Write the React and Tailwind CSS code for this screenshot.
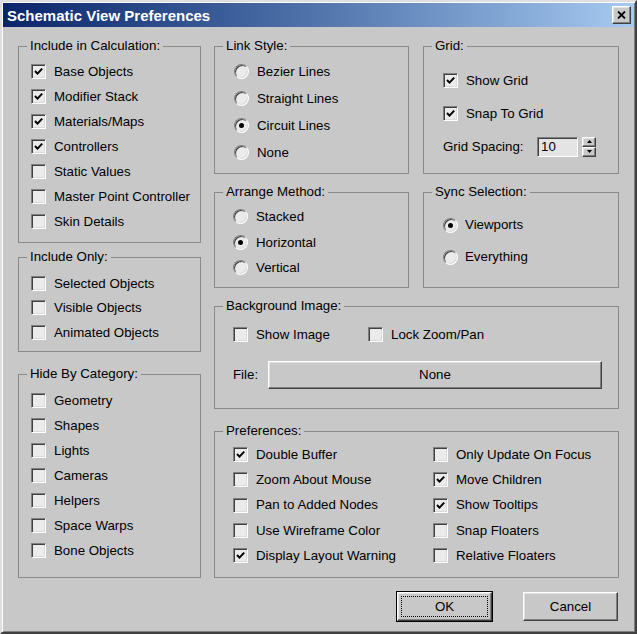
import React from 'react';

const font = "font-['Liberation_Sans',Arial,sans-serif]";

function CheckBox({ checked }) {
  return (
    <span className="flex h-[15px] w-[15px] shrink-0 items-center justify-center border border-t-[#808080] border-l-[#808080] border-b-white border-r-white bg-[#ebebeb] shadow-[inset_1px_1px_0_#404040,inset_-1px_-1px_0_#dadada]">
      {checked && (
        <svg width="11" height="11" viewBox="0 0 11 11">
          <polyline points="2,5 4.5,7.6 9.2,2.6" fill="none" stroke="#000" strokeWidth="2" />
        </svg>
      )}
    </span>
  );
}

function Radio({ checked }) {
  return (
    <span className="flex h-[15px] w-[15px] shrink-0 items-center justify-center rounded-full border border-t-[#808080] border-l-[#808080] border-b-white border-r-white bg-[#ebebeb] shadow-[inset_1px_1px_0_#404040,inset_-1px_-1px_0_#dadada]">
      {checked && <span className="h-[5px] w-[5px] rounded-full bg-black" />}
    </span>
  );
}

function Row({ kind = 'check', checked, label, h, gap = 'gap-[8px]', className = '' }) {
  return (
    <div className={`flex items-center ${gap} ${h} ${className}`}>
      {kind === 'check' ? <CheckBox checked={checked} /> : <Radio checked={checked} />}
      <span className="leading-none">{label}</span>
    </div>
  );
}

// group box: the padding goes on the inner div so the legend keeps its own offset
function Group({ label, className = '', inner = '', children }) {
  return (
    <fieldset className={`border border-[#8a8a8a] ${className}`}>
      <legend className="ml-[8px] px-[3px] leading-[16px]">{label}</legend>
      <div className={inner}>{children}</div>
    </fieldset>
  );
}

function RaisedBox({ className = '', children }) {
  return (
    <div
      className={`border border-t-white border-l-white border-b-[#404040] border-r-[#404040] bg-[#c8c8c8] shadow-[inset_-1px_-1px_0_#808080,inset_1px_1px_0_#e2e2e2] ${className}`}
    >
      {children}
    </div>
  );
}

const includeCalc = [
  ['Base Objects', true],
  ['Modifier Stack', true],
  ['Materials/Maps', true],
  ['Controllers', true],
  ['Static Values', false],
  ['Master Point Controller', false],
  ['Skin Details', false],
];

const includeOnly = ['Selected Objects', 'Visible Objects', 'Animated Objects'];

const hideBy = ['Geometry', 'Shapes', 'Lights', 'Cameras', 'Helpers', 'Space Warps', 'Bone Objects'];

const prefLeft = [
  ['Double Buffer', true],
  ['Zoom About Mouse', false],
  ['Pan to Added Nodes', false],
  ['Use Wireframe Color', false],
  ['Display Layout Warning', true],
];

const prefRight = [
  ['Only Update On Focus', false],
  ['Move Children', true],
  ['Show Tooltips', true],
  ['Snap Floaters', false],
  ['Relative Floaters', false],
];

export default function App() {
  return (
    <div
      className={`${font} flex h-[634px] w-[637px] flex-col border-2 border-t-[#dfdfdf] border-l-[#dfdfdf] border-r-[#404040] border-b-[#404040] bg-[#c8c8c8] p-px text-[13.3px] text-black shadow-[inset_1px_1px_0_#fff,inset_-1px_-1px_0_#808080]`}
    >
      {/* title bar */}
      <div className="flex h-[24px] shrink-0 items-center justify-between bg-linear-to-r from-[#0a246a] to-[#a6caf0] pl-[4px] pr-[3px]">
        <span className="text-[15px] font-bold leading-none text-white">Schematic View Preferences</span>
        <RaisedBox className="flex h-[18px] w-[19px] items-center justify-center">
          <svg width="9" height="8" viewBox="0 0 9 8">
            <path d="M1 0.5 L8 7.5 M8 0.5 L1 7.5" stroke="#000" strokeWidth="1.8" />
          </svg>
        </RaisedBox>
      </div>

      <div className="flex gap-[13px] px-[15px] pt-[11px]">
        {/* left column */}
        <div className="flex w-[183px] flex-col">
          <Group label="Include in Calculation:" className="h-[205px]" inner="pl-[12px] pt-[5px]">
            {includeCalc.map(([l, c]) => (
              <Row key={l} label={l} checked={c} h="h-[25px]" />
            ))}
          </Group>
          <Group label="Include Only:" className="mt-[6px] h-[103px]" inner="pl-[12px] pt-[6px]">
            {includeOnly.map((l) => (
              <Row key={l} label={l} h="h-[24.5px]" />
            ))}
          </Group>
          <Group label="Hide By Category:" className="mt-[14px] h-[212px]" inner="pl-[12px] pt-[6px]">
            {hideBy.map((l) => (
              <Row key={l} label={l} h="h-[25px]" />
            ))}
          </Group>
        </div>

        {/* right area */}
        <div className="flex w-[405px] flex-col">
          <div className="grid grid-cols-[195px_196px] gap-x-[14px] gap-y-[10px]">
            <Group label="Link Style:" className="h-[136px]" inner="pl-[19px] pt-[4px]">
              <Row kind="radio" label="Bezier Lines" h="h-[27px]" />
              <Row kind="radio" label="Straight Lines" h="h-[27px]" />
              <Row kind="radio" label="Circuit Lines" checked h="h-[27px]" />
              <Row kind="radio" label="None" h="h-[27px]" />
            </Group>
            <Group label="Grid:" className="h-[136px]" inner="pl-[19px] pt-[10px]">
              <Row label="Show Grid" checked h="h-[33px]" />
              <Row label="Snap To Grid" checked h="h-[33px]" />
              <div className="flex h-[33px] items-center">
                <span className="w-[94px]">Grid Spacing:</span>
                <div className="flex h-[20px] w-[41px] items-center border border-t-[#808080] border-l-[#808080] border-b-white border-r-white bg-[#e4e4e4] pl-[3px] shadow-[inset_1px_1px_0_#404040]">
                  10
                </div>
                <div className="ml-[4px] flex h-[20px] w-[14px] flex-col">
                  <RaisedBox className="flex flex-1 items-center justify-center">
                    <svg width="5" height="3" viewBox="0 0 5 3">
                      <path d="M2.5 0 L5 3 L0 3 Z" fill="#000" />
                    </svg>
                  </RaisedBox>
                  <RaisedBox className="flex flex-1 items-center justify-center">
                    <svg width="5" height="3" viewBox="0 0 5 3">
                      <path d="M0 0 L5 0 L2.5 3 Z" fill="#000" />
                    </svg>
                  </RaisedBox>
                </div>
              </div>
            </Group>
            <Group label="Arrange Method:" className="h-[104px]" inner="pl-[18px] pt-[4px]">
              <Row kind="radio" label="Stacked" h="h-[25.5px]" />
              <Row kind="radio" label="Horizontal" checked h="h-[25.5px]" />
              <Row kind="radio" label="Vertical" h="h-[25.5px]" />
            </Group>
            <Group label="Sync Selection:" className="h-[104px]" inner="pl-[19px] pt-[9px]">
              <Row kind="radio" label="Viewports" checked h="h-[32px]" gap="gap-[7px]" />
              <Row kind="radio" label="Everything" h="h-[32px]" gap="gap-[7px]" />
            </Group>
          </div>

          <Group label="Background Image:" className="mt-[10px] h-[111px]" inner="pl-[18px] pr-[16px] pt-[8px]">
            <div className="flex h-[25px] items-center">
              <Row label="Show Image" h="h-[25px]" className="w-[135px]" />
              <Row label="Lock Zoom/Pan" h="h-[25px]" />
            </div>
            <div className="mt-[14px] flex items-center">
              <span className="w-[35px]">File:</span>
              <RaisedBox className="flex h-[28px] flex-1 items-center justify-center">None</RaisedBox>
            </div>
          </Group>

          <Group label="Preferences:" className="mt-[14px] h-[155px]" inner="pl-[18px] pt-[3px]">
            <div className="grid grid-cols-[200px_1fr]">
              <div className="flex flex-col">
                {prefLeft.map(([l, c]) => (
                  <Row key={l} label={l} checked={c} h="h-[25.25px]" />
                ))}
              </div>
              <div className="flex flex-col">
                {prefRight.map(([l, c]) => (
                  <Row key={l} label={l} checked={c} h="h-[25.25px]" />
                ))}
              </div>
            </div>
          </Group>
        </div>
      </div>

      <div className="mt-[14px] flex justify-end gap-[31px] pr-[16px]">
        <RaisedBox className="flex h-[29px] w-[95px] items-stretch p-[3px] outline outline-1 outline-black">
          <span className="flex flex-1 items-center justify-center border border-dotted border-black">OK</span>
        </RaisedBox>
        <RaisedBox className="flex h-[29px] w-[95px] items-center justify-center">Cancel</RaisedBox>
      </div>
    </div>
  );
}
